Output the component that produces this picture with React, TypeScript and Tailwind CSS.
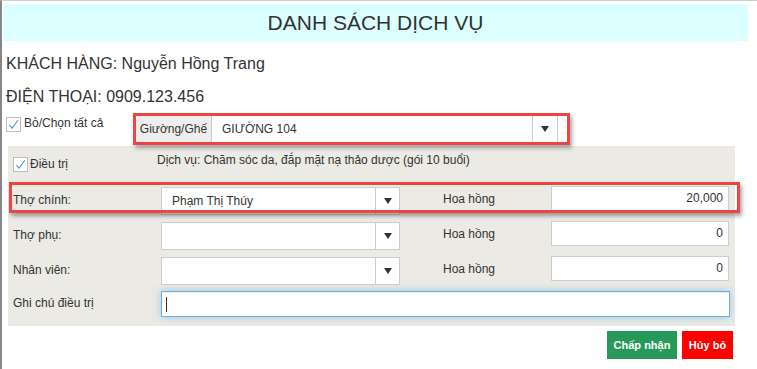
import React from "react";

const STAFF = [
  { label: "Thợ chính:", value: "Phạm Thị Thúy", rate: "20,000", marked: true },
  { label: "Thợ phụ:", value: "", rate: "0", marked: false },
  { label: "Nhân viên:", value: "", rate: "0", marked: false },
];

function Check() {
  return (
    <span className="inline-flex h-[15px] w-[15px] shrink-0 items-center justify-center border border-[#bdbdbd] bg-white">
      <svg width="11" height="11" viewBox="0 0 11 11">
        <path d="M1.5 6.2 L4.2 9.2 L9.8 1.2" fill="none" stroke="#3f8fe4" strokeWidth="1.1" />
      </svg>
    </span>
  );
}

function Arrow() {
  return (
    <svg width="8" height="6" viewBox="0 0 8 6">
      <path d="M0 0H8L4 6Z" fill="#333" />
    </svg>
  );
}

function Select({ value }: { value: string }) {
  return (
    <div className="flex h-[28px] w-[239px] shrink-0 border border-[#ccc] bg-white">
      <div className="flex-1 pl-[10px] text-[12px] leading-[26px] text-[#333]">{value}</div>
      <div className="flex w-[24px] items-center justify-center border-l border-[#ccc]">
        <Arrow />
      </div>
    </div>
  );
}

export default function App() {
  return (
    <div className="h-[369px] w-[757px] overflow-hidden border-l-2 border-t border-l-[#878787] border-t-[#d0d0d0] bg-white font-['Liberation_Sans',Arial,sans-serif] text-[#333]">
      <div className="ml-px mt-[3px] flex h-[37px] w-[745px] items-center justify-center bg-[#dcffff] text-[21px] text-[#333]">
        DANH SÁCH DỊCH VỤ
      </div>

      <div className="mt-[11px] pl-1 text-[16px] leading-[24px]">KHÁCH HÀNG: Nguyễn Hồng Trang</div>
      <div className="mt-[9px] pl-1 text-[16px] leading-[24px]">ĐIỆN THOẠI: 0909.123.456</div>

      <div className="mt-[4px] flex items-start pl-1">
        <label className="mt-[3px] flex w-[127px] items-center gap-[3px] text-[12px] leading-[15px]">
          <Check />
          <span className="pb-[2px]">Bỏ/Chọn tất cả</span>
        </label>
        <div className="relative z-10 flex h-[32px] w-[437px] border-[3px] border-[#ef4444] bg-white shadow-[2px_3px_4px_rgba(0,0,0,0.35)]">
          <div className="flex w-[75px] items-center justify-center bg-[#eee] text-[12px]">Giường/Ghế</div>
          <div className="flex flex-1 border-l border-[#ccc]">
            <div className="flex-1 pl-[10px] text-[12px] leading-[26px]">GIƯỜNG 104</div>
            <div className="flex w-[25px] items-center justify-center border-l border-[#ccc]">
              <Arrow />
            </div>
            <div className="w-[10px] border-l border-[#ccc]" />
          </div>
        </div>
      </div>

      <div className="ml-[6px] mt-px w-[727px] bg-[#ebeae4] pb-[9px] pt-[4px] text-[12px]">
        <div className="flex h-[28px] items-center pl-[5px]">
          <div className="flex w-[144px] items-center gap-[2px]">
            <Check />
            <span>Điều trị</span>
          </div>
          <span className="pb-[8px]">Dịch vụ: Chăm sóc da, đắp mặt nạ thảo dược (gói 10 buổi)</span>
        </div>

        {STAFF.map((s, i) => (
          <div key={i} className={`relative flex h-[28px] items-center pl-[5px] ${i === 0 ? "mt-[9px]" : "mt-[7px]"}`}>
            <span className="w-[148px] pb-[2px]">{s.label}</span>
            <Select value={s.value} />
            <span className="w-[151px] pb-[4px] pl-[43px]">Hoa hồng</span>
            <div className="-mt-px h-[25px] w-[178px] self-start border border-[#ccc] bg-white pr-[5px] text-right leading-[23px]">
              {s.rate}
            </div>
            {s.marked && (
              <div className="pointer-events-none absolute -right-[5px] -top-[5px] left-px h-[31px] border-[3px] border-[#ef4444] shadow-[2px_3px_4px_rgba(0,0,0,0.35)]" />
            )}
          </div>
        ))}

        <div className="mt-[6px] flex h-[26px] items-center pl-[5px]">
          <span className="w-[148px] pb-[2px]">Ghi chú điều trị</span>
          <div className="flex h-[26px] w-[569px] items-center border border-[#66afe9] bg-white pl-[4px] shadow-[inset_0_1px_1px_rgba(0,0,0,0.075),0_0_8px_rgba(102,175,233,0.6)]">
            <span className="h-[15px] w-px bg-[#333]" />
          </div>
        </div>
      </div>

      <div className="ml-[6px] mt-[5px] flex w-[727px] justify-end gap-[5px] pr-[2px]">
        <button className="h-[28px] w-[70px] bg-[#26995a] text-[11px] font-bold text-white">Chấp nhận</button>
        <button className="h-[28px] w-[51px] bg-[#ff0000] text-[11px] font-bold text-white">Hủy bỏ</button>
      </div>
    </div>
  );
}
